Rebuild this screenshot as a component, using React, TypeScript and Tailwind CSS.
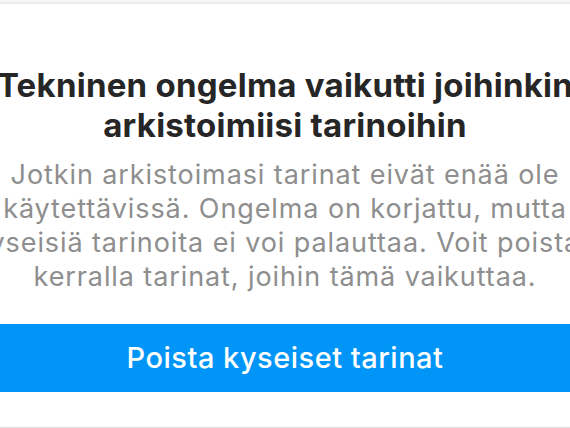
export default function App() {
  return (
    <div className="w-[570px] h-[428px] overflow-hidden bg-white flex flex-col" style={{ fontFamily: 'Inter, "Noto Sans", sans-serif' }}>
      <div className="h-[2px] bg-[#f6f6f6]" />
      <div className="h-[2px] bg-[#ececec]" />

      <div className="flex flex-col items-center pt-[61px]">
        <h1 className="text-[33px] leading-[40px] font-bold tracking-[0.25px] text-[#262626] text-center whitespace-nowrap">
          <div>Tekninen ongelma vaikutti joihinkin</div>
          <div>arkistoimiisi tarinoihin</div>
        </h1>
        <div className="mt-[13px] text-[27px] leading-[34px] tracking-[0.9px] text-[#8e8e8e] text-center whitespace-nowrap">
          <div>Jotkin arkistoimasi tarinat eivät enää ole</div>
          <div>käytettävissä. Ongelma on korjattu, mutta</div>
          <div>kyseisiä tarinoita ei voi palauttaa. Voit poistaa</div>
          <div>kerralla tarinat, joihin tämä vaikuttaa.</div>
        </div>
      </div>

      <button className="mt-[30px] h-[68px] w-full shrink-0 bg-[#0095f6] text-white text-[29px] font-medium tracking-[0.5px]">
        Poista kyseiset tarinat
      </button>

      <div className="flex-1" />
      <div className="h-[1px] bg-[#e0e0e0]" />
    </div>
  );
}
